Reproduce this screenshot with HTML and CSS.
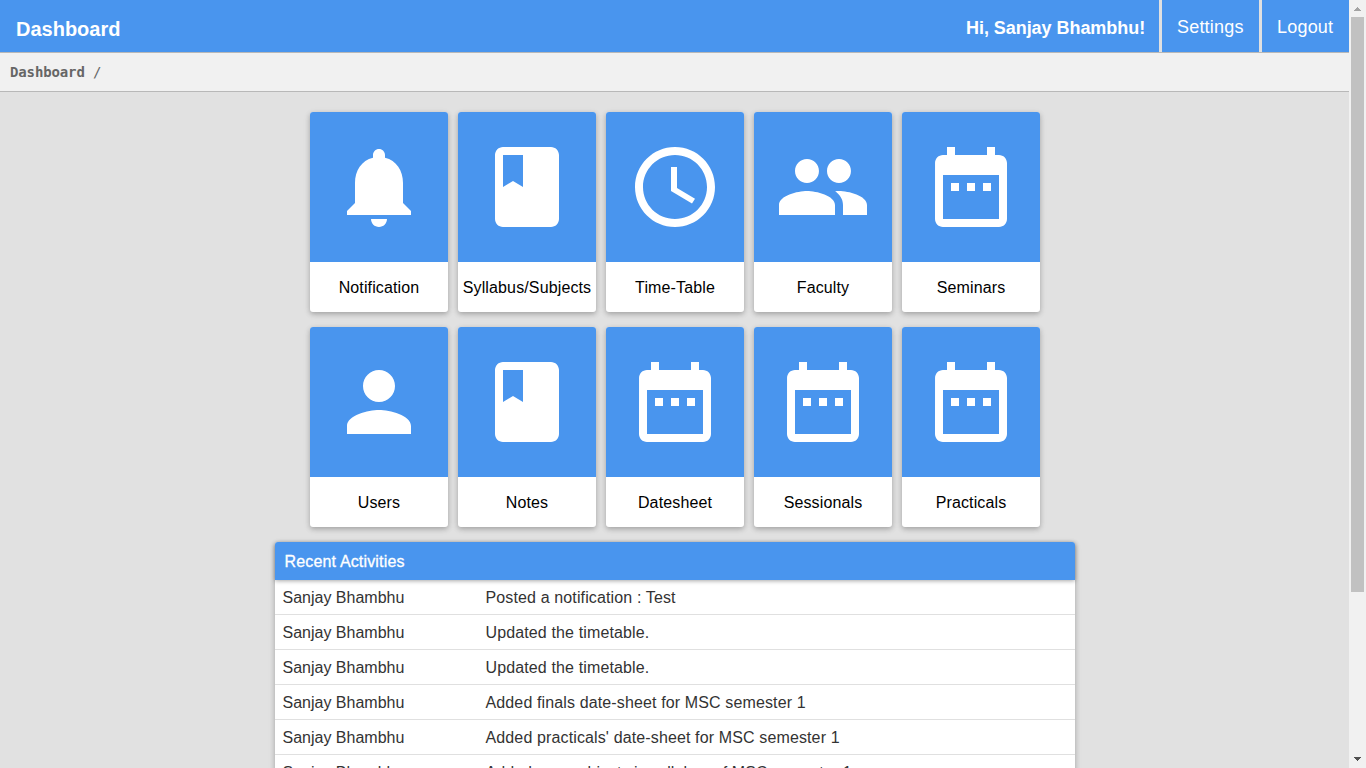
FILE: index.html
```html
<!DOCTYPE html>
<html lang="en">
<head>
<meta charset="utf-8">
<title>Dashboard</title>
<link rel="stylesheet" href="styles.css">
</head>
<body>
<svg class="defs" width="0" height="0" aria-hidden="true">
<symbol id="bell" viewBox="0 0 24 24"><path d="M12 22c1.1 0 2-.9 2-2h-4c0 1.1.89 2 2 2zm6-6v-5c0-3.07-1.64-5.64-4.5-6.32V4c0-.83-.67-1.5-1.5-1.5s-1.5.67-1.5 1.5v.68C7.63 5.36 6 7.92 6 11v5l-2 2v1h16v-1l-2-2z"/></symbol>
<symbol id="book" viewBox="0 0 24 24"><path d="M18 2H6c-1.1 0-2 .9-2 2v16c0 1.100.9 2 2 2h12c1.100 0 2-.9 2-2V4c0-1.100-.9-2-2-2zM6 4h5v8l-2.500-1.500L6 12V4z"/></symbol>
<symbol id="clock" viewBox="0 0 24 24"><path d="M11.990 2C6.470 2 2 6.480 2 12s4.470 10 9.990 10C17.520 22 22 17.520 22 12S17.520 2 11.990 2zM12 20c-4.420 0-8-3.580-8-8s3.580-8 8-8 8 3.580 8 8-3.580 8-8 8zM12.500 7H11v6l5.250 3.150.75-1.230-4.500-2.670z"/></symbol>
<symbol id="people" viewBox="0 0 24 24"><path d="M16 11c1.660 0 2.990-1.340 2.990-3S17.660 5 16 5c-1.660 0-3 1.340-3 3s1.340 3 3 3zm-8 0c1.660 0 2.990-1.340 2.990-3S9.660 5 8 5C6.340 5 5 6.340 5 8s1.340 3 3 3zm0 2c-2.330 0-7 1.170-7 3.500V19h14v-2.500c0-2.330-4.670-3.500-7-3.500zm8 0c-.29 0-.62.020-.97.050 1.160.84 1.970 1.970 1.970 3.450V19h6v-2.500c0-2.330-4.670-3.500-7-3.500z"/></symbol>
<symbol id="person" viewBox="0 0 24 24"><path d="M12 12c2.210 0 4-1.790 4-4s-1.790-4-4-4-4 1.790-4 4 1.790 4 4 4zm0 2c-2.670 0-8 1.340-8 4v2h16v-2c0-2.660-5.330-4-8-4z"/></symbol>
<symbol id="calendar" viewBox="0 0 24 24"><path d="M9 11H7v2h2v-2zm4 0h-2v2h2v-2zm4 0h-2v2h2v-2zm2-7h-1V2h-2v2H8V2H6v2H5c-1.110 0-1.990.9-1.990 2L3 20c0 1.100.89 2 2 2h14c1.100 0 2-.9 2-2V6c0-1.100-.9-2-2-2zm0 16H5V9h14v11z"/></symbol>
</svg>
<div class="window">
<div class="page">
<header class="topbar">
<h1 class="brand"><span>Dashboard</span></h1>
<span class="greeting"><span>Hi, Sanjay Bhambhu!</span></span>
<a class="toplink settings"><span>Settings</span></a>
<a class="toplink logout"><span>Logout</span></a>
</header>
<nav class="crumbs"><b>Dashboard</b> /</nav>
<main class="content">
<div class="tiles">
<a class="tile"><div class="art"><svg><use href="#bell"/></svg></div><div class="label"><span>Notification</span></div></a>
<a class="tile"><div class="art"><svg><use href="#book"/></svg></div><div class="label"><span>Syllabus/Subjects</span></div></a>
<a class="tile"><div class="art"><svg><use href="#clock"/></svg></div><div class="label"><span>Time-Table</span></div></a>
<a class="tile"><div class="art"><svg><use href="#people"/></svg></div><div class="label"><span>Faculty</span></div></a>
<a class="tile"><div class="art"><svg><use href="#calendar"/></svg></div><div class="label"><span>Seminars</span></div></a>
<a class="tile"><div class="art"><svg><use href="#person"/></svg></div><div class="label"><span>Users</span></div></a>
<a class="tile"><div class="art"><svg><use href="#book"/></svg></div><div class="label"><span>Notes</span></div></a>
<a class="tile"><div class="art"><svg><use href="#calendar"/></svg></div><div class="label"><span>Datesheet</span></div></a>
<a class="tile"><div class="art"><svg><use href="#calendar"/></svg></div><div class="label"><span>Sessionals</span></div></a>
<a class="tile"><div class="art"><svg><use href="#calendar"/></svg></div><div class="label"><span>Practicals</span></div></a>
</div>
<section class="recent">
<h2 class="recent-title">Recent Activities</h2>
<div class="row"><span>Sanjay Bhambhu</span><span class="action">Posted a notification : Test</span></div>
<div class="row"><span>Sanjay Bhambhu</span><span class="action">Updated the timetable.</span></div>
<div class="row"><span>Sanjay Bhambhu</span><span class="action">Updated the timetable.</span></div>
<div class="row"><span>Sanjay Bhambhu</span><span class="action">Added finals date-sheet for MSC semester 1</span></div>
<div class="row"><span>Sanjay Bhambhu</span><span class="action">Added practicals' date-sheet for MSC semester 1</span></div>
<div class="row"><span>Sanjay Bhambhu</span><span class="action last">Added new subjects in syllabus of MSC semester 1</span></div>
</section>
</main>
</div>
<div class="scrollbar">
<svg class="arrow up" viewBox="0 0 17 17"><path d="M8 7h1v1h1v1h1v1h1v1H5v-1h1V9h1V8h1z"/></svg>
<div class="thumb"></div>
<svg class="arrow down" viewBox="0 0 17 17"><path d="M5 6h7v1h-1v1h-1v1H9v1H8V9H7V8H6V7H5z"/></svg>
</div>
</div>
</body>
</html>
```
FILE: styles.css
```css
* { box-sizing: border-box; }
body { margin: 0; font-family: "Liberation Sans", Arial, sans-serif; font-size: 16px; color: #000; }
.defs { display: block; width: 0; height: 0; }
.window { display: flex; height: 768px; overflow: hidden; }
.page { width: 1349px; height: 768px; overflow: hidden; background: #e1e1e1; }
.topbar { display: flex; height: 53px; background: #4995ee; border-bottom: 1px solid #b8b8b8; color: #fff; }
.brand { margin: 0; padding: 6px 0 0 16px; flex: 1; font-size: 20px; line-height: 46px; letter-spacing: 0; }
.greeting { width: 193px; font-size: 18px; font-weight: bold; line-height: 56px; white-space: nowrap; letter-spacing: -0.05px; }
.toplink { border-left: 3px solid #e0e0e0; font-size: 18px; line-height: 54px; padding-left: 15px; letter-spacing: .2px; }
.settings { width: 100px; }
.logout { width: 90px; }
.crumbs { height: 39px; padding-left: 10px; background: #f1f1f1; border-bottom: 1px solid #b8b8b8; font: 14px/39px "DejaVu Sans Mono", monospace; letter-spacing: -.13px; color: #666; }
.content { padding-top: 20px; }
.tiles { display: grid; grid-template-columns: repeat(5, 138px); gap: 15px 10px; margin: 0 0 15px 310px; }
.tile { display: block; height: 200px; border-radius: 3px; background: #fff; box-shadow: 0 2px 5px rgba(0,0,0,.24), 0 2px 10px rgba(0,0,0,.06); }
.art { display: flex; height: 150px; align-items: center; justify-content: center; background: #4995ee; border-radius: 3px 3px 0 0; }
.art svg { width: 96px; height: 96px; fill: #fff; }
.label { text-align: center; line-height: 51px; white-space: nowrap; letter-spacing: .13px; }
.recent { width: 800px; margin-left: 275px; border-radius: 3px; background: #fff; box-shadow: 0 2px 5px rgba(0,0,0,.24), 0 2px 10px rgba(0,0,0,.06); color: #333; }
.recent-title { position: relative; margin: 0; height: 38px; padding-left: 9.5px; background: #4995ee; border-radius: 3px 3px 0 0; box-shadow: 0 1px 4px rgba(0,0,0,.35); color: #fff; font-size: 16px; font-weight: normal; line-height: 39px; letter-spacing: .16px; -webkit-text-stroke: .3px #fff; }
.row { display: grid; grid-template-columns: 203px 1fr; height: 35px; padding-left: 7.5px; border-bottom: 1px solid #e0e0e0; line-height: 36px; white-space: nowrap; }
.action { letter-spacing: .13px; }
.last { letter-spacing: .05px; }
.scrollbar { display: flex; flex-direction: column; width: 17px; background: #f1f1f1; }
.arrow { width: 17px; height: 17px; shape-rendering: crispEdges; }
.up { fill: #a3a3a3; }
.down { margin-top: auto; fill: #505050; }
.thumb { width: 13px; height: 575px; margin-left: 2px; background: #c1c1c1; }
```
